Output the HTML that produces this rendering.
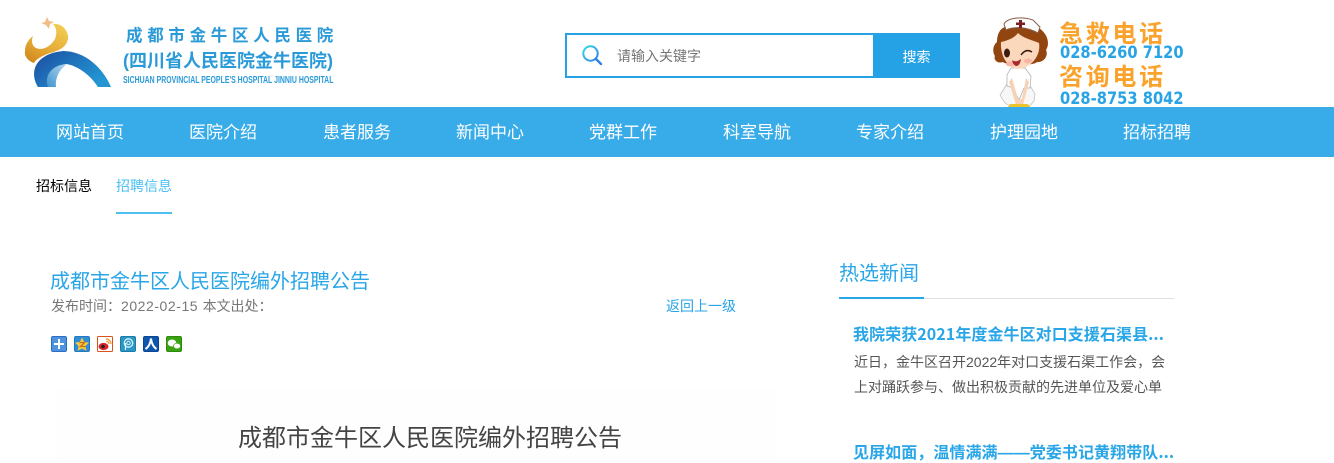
<!DOCTYPE html>
<html lang="zh-CN">
<head>
<meta charset="utf-8">
<title>成都市金牛区人民医院编外招聘公告</title>
<style>
html,body{margin:0;padding:0;background:#fff}
body{width:1334px;height:461px;overflow:hidden;position:relative;font-family:"Liberation Sans","WenQuanYi Zen Hei Sharp","WenQuanYi Zen Hei","Noto Sans CJK SC",sans-serif}
.a{position:absolute;white-space:nowrap}
.nav{left:0;top:107px;width:1334px;height:50px;background:#38abe9}
.nav span{position:absolute;top:1px;line-height:50px;font-size:17px;color:#fff;white-space:nowrap}
.t{font-family:"Noto Sans CJK SC",sans-serif;font-size:16px;font-weight:bold;line-height:19px;color:#29a6e8;letter-spacing:.07px}
svg{position:absolute;display:block}
</style>
</head>
<body>
<!-- logo -->
<svg style="left:20px;top:10px" width="100" height="85" viewBox="0 0 100 85">
<defs>
<linearGradient id="g1" x1="0.8" y1="0" x2="0.2" y2="1"><stop offset="0" stop-color="#f2cd52"/><stop offset="0.55" stop-color="#e6ad38"/><stop offset="1" stop-color="#d28a1e"/></linearGradient>
<linearGradient id="g2" x1="0" y1="0" x2="1" y2="0.6"><stop offset="0" stop-color="#1d4c9e"/><stop offset="0.45" stop-color="#1f6fb8"/><stop offset="1" stop-color="#2296d2"/></linearGradient>
<linearGradient id="g3" x1="0" y1="1" x2="1" y2="0"><stop offset="0" stop-color="#3f93cf"/><stop offset="1" stop-color="#b5daee"/></linearGradient>
</defs>
<path d="M27 7 L29 11 L34 12 L30 14 L29 19 L26 15 L21 13 L25 12Z" fill="#f2bd85"/>
<path d="M33 14 C42 13 49 21 48 29 C46 38 38 41 30 43 C22 46 16 49 14 53 C8 51 4 46 5 41 C5 35 8 30 13 26 C11 31 12 36 16 38 C23 41 31 36 35 29 C37 24 37 18 33 14Z" fill="url(#g1)"/>
<path d="M18 77 C9 62 15 44 43 41 C65 41 83 58 91 77 L78 77 C69 63 55 55 46 54 C35 56 30 66 34 77Z" fill="url(#g2)"/>
<path d="M28 77 C24 66 31 55 47 54 C39 60 35 68 36 77Z" fill="url(#g3)"/>
</svg>
<div class="a" style="left:126px;top:26px;font-size:16.5px;font-weight:bold;line-height:20px;letter-spacing:4.7px;color:#2a9ad8">成都市金牛区人民医院</div>
<div class="a" style="left:123px;top:51px;font-size:18px;font-weight:bold;line-height:20px;color:#2a9ad8">(四川省人民医院金牛医院)</div>
<div class="a" style="left:123px;top:74px;font-size:10px;font-weight:bold;line-height:14px;color:#2a9ad8;transform-origin:0 50%;transform:scaleX(.695)">SICHUAN PROVINCIAL PEOPLE'S HOSPITAL JINNIU HOSPITAL</div>

<!-- search -->
<div class="a" style="left:565px;top:33px;width:306px;height:41px;border:2px solid #24a2e5;background:#fff"></div>
<div class="a" style="left:873px;top:33px;width:87px;height:45px;background:#24a2e5;color:#fff;font-size:14px;line-height:48px;text-align:center">搜索</div>
<svg style="left:580px;top:43px" width="24" height="24" viewBox="0 0 24 24">
<defs><linearGradient id="s" x1="0" y1="0" x2="1" y2="1"><stop offset="0" stop-color="#32dbe6"/><stop offset="1" stop-color="#2f7fe8"/></linearGradient></defs>
<circle cx="10.500" cy="10.500" r="7.200" fill="none" stroke="url(#s)" stroke-width="2"/>
<path d="M16 16 L21 21" stroke="#2f7fe8" stroke-width="2.400" stroke-linecap="round"/>
</svg>
<div class="a" style="left:617px;top:47px;font-size:14px;line-height:18px;color:#757575">请输入关键字</div>

<!-- nurse -->
<svg style="left:985px;top:10px" width="70" height="97" viewBox="0 0 70 97">
<path d="M22 74 L15 85 L20 93 L27 97 L44 97 L49 91 L50 84 L44 74Z" fill="#f7f7f7" stroke="#b9b9b9" stroke-width=".7"/>
<path d="M26 58 L40 58 L46 66 L45 78 L39 78 L34 90 L28 78 L22 76 L22 65Z" fill="#fff" stroke="#aaa" stroke-width=".7"/>
<path d="M27 68 L33 89 L37 89 L41 68 L44 72 L38 95 L31 95 L24 72Z" fill="#f8d2b5"/>
<path d="M25 94 L43 94 L45 97 L23 97Z" fill="#eec42c"/>
<path d="M20 17 C14 19 12 26 12 32 C8 35 7 42 10 46 C8 50 13 54 18 52 C22 56 48 56 52 52 C58 53 64 46 61 40 C65 34 63 24 54 18Z" fill="#93450f"/>
<path d="M16 32 C25 30 30 27 33 23 C38 28 47 30 54 33 C56 44 48 57 34 59 C23 59 15 46 16 32Z" fill="#fbd8bc"/>
<ellipse cx="22" cy="43" rx="3" ry="4.500" fill="#3a1c10"/>
<path d="M36 45 Q41 38 47 42" fill="none" stroke="#3a1c10" stroke-width="1.500"/>
<ellipse cx="25" cy="54" rx="4" ry="2.500" fill="#f8b5a5"/>
<ellipse cx="43" cy="51" rx="4" ry="2.500" fill="#f8b5a5"/>
<path d="M27 50 Q31 53 36 49 Q35 56 31 56 Q28 55 27 50Z" fill="#a92a2a"/>
<path d="M19 14 C22 8 36 6 48 10 L55 17 L53 23 C42 17 30 16 21 20Z" fill="#fdfdfd" stroke="#8a5b47" stroke-width="1"/>
<path d="M34 10 h3 v2.500 h3 v2.500 h-3 v3 h-3 v-3 h-3 v-2.500 h3Z" fill="#7a1f1f"/>
</svg>
<div class="a" style="left:1059px;top:21px;font-size:24px;font-weight:bold;line-height:28px;letter-spacing:2.700px;color:#f9a32c">急救电话</div>
<div class="a" style="left:1060px;top:43px;font-family:'DejaVu Sans',sans-serif;font-size:16.500px;font-weight:bold;line-height:20px;color:#27a3e6;transform-origin:0 50%;transform:scaleX(.89)">028-6260 7120</div>
<div class="a" style="left:1059px;top:64px;font-size:24px;font-weight:bold;line-height:28px;letter-spacing:2.700px;color:#f9a32c">咨询电话</div>
<div class="a" style="left:1060px;top:89px;font-family:'DejaVu Sans',sans-serif;font-size:16.500px;font-weight:bold;line-height:20px;color:#27a3e6;transform-origin:0 50%;transform:scaleX(.89)">028-8753 8042</div>

<!-- nav -->
<div class="a nav">
<span style="left:56px">网站首页</span>
<span style="left:189px">医院介绍</span>
<span style="left:323px">患者服务</span>
<span style="left:456px">新闻中心</span>
<span style="left:589px">党群工作</span>
<span style="left:723px">科室导航</span>
<span style="left:856px">专家介绍</span>
<span style="left:990px">护理园地</span>
<span style="left:1123px">招标招聘</span>
</div>

<!-- tabs -->
<div class="a" style="left:36px;top:177px;font-size:14px;line-height:18px;color:#000">招标信息</div>
<div class="a" style="left:116px;top:177px;font-size:14px;line-height:18px;color:#4dbff0">招聘信息</div>
<div class="a" style="left:116px;top:212px;width:56px;height:2px;background:#4dbff0"></div>

<!-- article -->
<div class="a" style="left:57px;top:388px;width:720px;height:73px;background:#fefefe"></div>
<div class="a" style="left:50px;top:270px;font-size:20px;line-height:24px;color:#29a6e8">成都市金牛区人民医院编外招聘公告</div>
<div class="a" style="left:51px;top:297px;font-size:14px;line-height:18px;color:#777">发布时间：<span style="letter-spacing:.55px">2022-02-15 </span>本文出处：</div>
<div class="a" style="left:666px;top:297px;font-size:14px;line-height:18px;color:#27a3e6">返回上一级</div>

<!-- share icons -->
<svg style="left:51px;top:336px" width="132" height="16" viewBox="0 0 132 16">
<rect x=".5" y=".5" width="15" height="15" rx="1.500" fill="#4f92e0" stroke="#2c6fc0"/>
<path d="M7 3h2v4h4v2H9v4H7V9H3V7h4Z" fill="#fff"/>
<rect x="23.500" y=".5" width="15" height="15" rx="1.500" fill="#2f8ed8" stroke="#2777bd"/>
<path d="M31 1.500l2.200 4.400 4.800.7-3.500 3.400.8 4.800-4.300-2.300-4.300 2.300.8-4.800L24 6.600l4.800-.7Z" fill="#f5c93a"/>
<path d="M28.500 6.500h5l-4 4h5" fill="none" stroke="#c8701a" stroke-width="1.300"/>
<rect x="46.500" y=".5" width="15" height="15" rx="1" fill="#fff" stroke="#d9541e"/>
<ellipse cx="52.500" cy="10.500" rx="5" ry="3.600" fill="#d8262c"/>
<circle cx="52" cy="10.500" r="1.800" fill="#222"/>
<path d="M55 3a5 5 0 0 1 5 5M55.500 5.500a2.500 2.500 0 0 1 2.500 2.500" fill="none" stroke="#f29a1f" stroke-width="1.200"/>
<rect x="69.500" y=".5" width="15" height="15" rx="1.500" fill="#2b97c5" stroke="#1a7ca8"/>
<circle cx="77.500" cy="7" r="4.200" fill="none" stroke="#d9f2fb" stroke-width="1.300"/>
<path d="M74.500 7v7" stroke="#d9f2fb" stroke-width="1.300"/>
<circle cx="77.500" cy="7" r="1.700" fill="none" stroke="#d9f2fb"/>
<rect x="92.500" y=".5" width="15" height="15" rx="1.500" fill="#0f56ad" stroke="#0b4690"/>
<path d="M100 2.500 C99.500 7 97.500 11 94.500 13 M100 2.500 C100.500 7 102.500 11 105.500 13" fill="none" stroke="#fff" stroke-width="2"/>
<rect x="115.500" y=".5" width="15" height="15" rx="1.500" fill="#3ba212" stroke="#2f8a0c"/>
<ellipse cx="121" cy="7" rx="4.300" ry="3.500" fill="#fff"/>
<ellipse cx="126" cy="10" rx="3.500" ry="2.800" fill="#fff" stroke="#3ba212" stroke-width=".6"/>
</svg>

<div class="a" style="left:238px;top:424px;font-size:24px;line-height:30px;color:#444">成都市金牛区人民医院编外招聘公告</div>

<!-- sidebar -->
<div class="a" style="left:839px;top:262px;font-size:20px;line-height:24px;color:#29a6e8">热选新闻</div>
<div class="a" style="left:839px;top:298px;width:335px;height:1px;background:#dfdfdf"></div>
<div class="a" style="left:839px;top:297px;width:85px;height:2px;background:#29a6e8"></div>
<div class="a t" style="left:853px;top:324px">我院荣获2021年度金牛区对口支援石渠县...</div>
<div class="a" style="left:854px;top:353px;font-size:14px;line-height:18px;color:#555">近日，金牛区召开2022年对口支援石渠工作会，会</div>
<div class="a" style="left:854px;top:378px;font-size:14px;line-height:18px;color:#555">上对踊跃参与、做出积极贡献的先进单位及爱心单</div>
<div class="a t" style="left:853px;top:442px">见屏如面，温情满满<span style="font-family:'Liberation Sans',sans-serif">——</span>党委书记黄翔带队...</div>
</body>
</html>
